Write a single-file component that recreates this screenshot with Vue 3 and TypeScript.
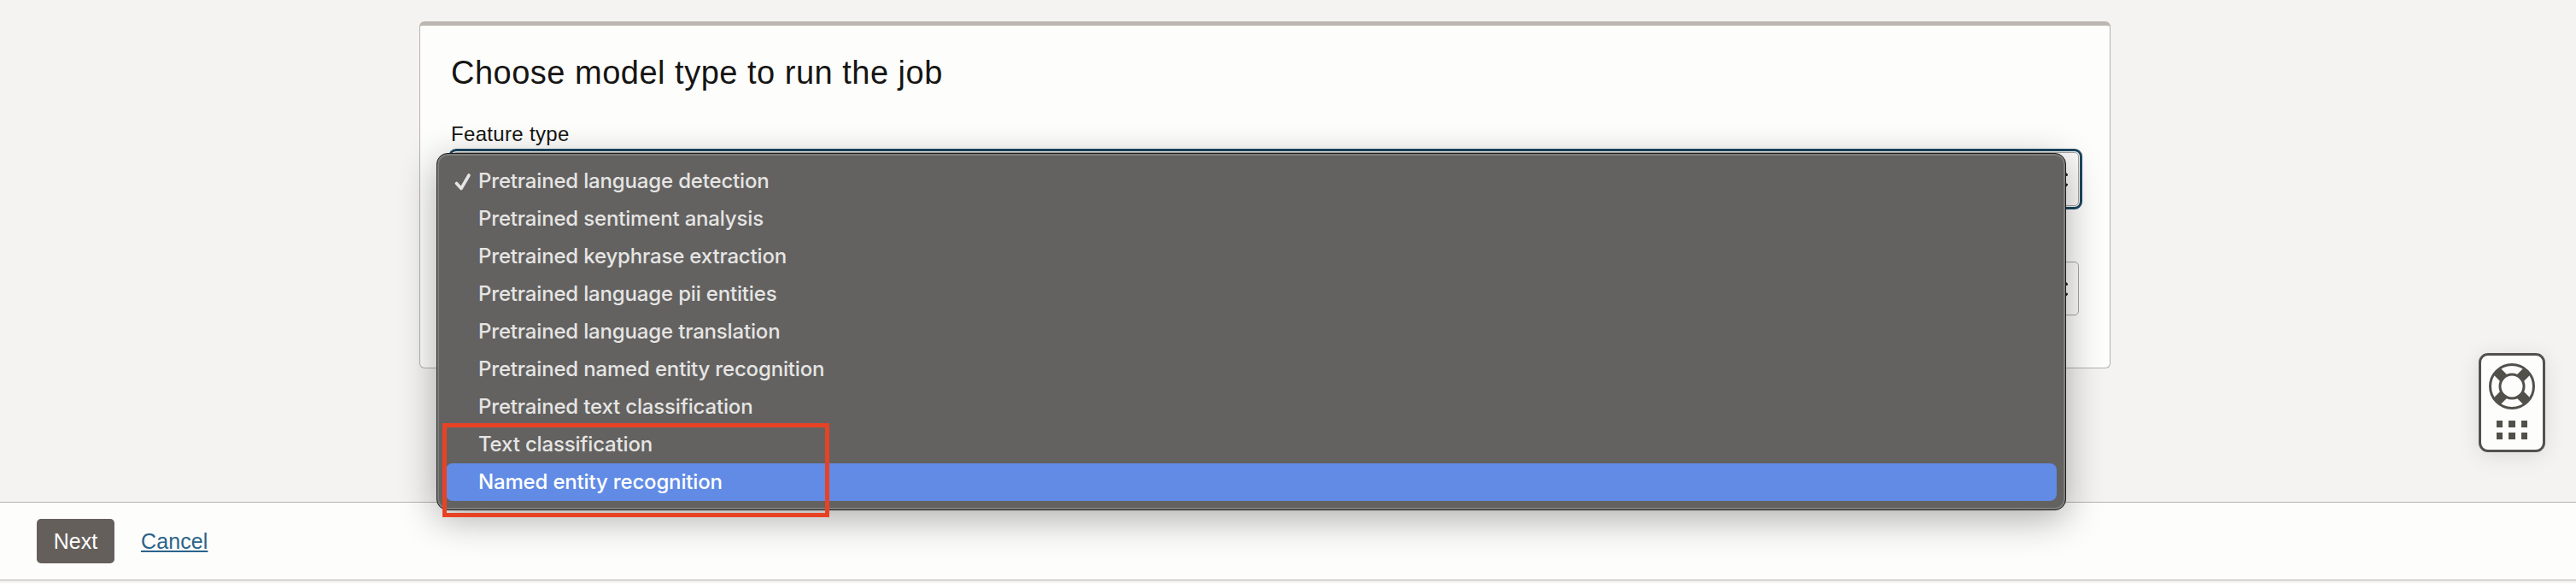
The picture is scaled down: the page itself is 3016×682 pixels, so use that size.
<script setup lang="ts">
import { ref } from 'vue'

const options: string[] = [
  'Pretrained language detection',
  'Pretrained sentiment analysis',
  'Pretrained keyphrase extraction',
  'Pretrained language pii entities',
  'Pretrained language translation',
  'Pretrained named entity recognition',
  'Pretrained text classification',
  'Text classification',
  'Named entity recognition',
]
const selected = ref(0)
const active = ref(8)
</script>

<template>
  <div class="page">
    <main class="content">
      <section class="card">
        <h1 class="title">Choose model type to run the job</h1>
        <label class="label">Feature type</label>
        <div class="field">
          <div class="select focused">
            <svg class="arrows" viewBox="0 0 14 26"><path d="M1.500 7.500L7 2l5.500 5.500M1.500 19L7 24.500l5.500-5.500" /></svg>
          </div>
          <div class="menu">
            <div
              v-for="(option, i) in options"
              :key="option"
              class="option"
              :class="{ active: i === active }"
              @mouseenter="active = i"
              @click="selected = i"
            >
              <svg v-if="i === selected" class="check" viewBox="0 0 20 22"><path d="M2.500 12.500L8 18.500L17 3" /></svg>
              <span class="text">{{ option }}</span>
            </div>
            <div class="marker"></div>
          </div>
        </div>
        <div class="select second">
          <svg class="arrows" viewBox="0 0 14 26"><path d="M1.500 7.500L7 2l5.500 5.500M1.500 19L7 24.500l5.500-5.500" /></svg>
        </div>
      </section>
    </main>
    <footer class="footer">
      <button class="next">Next</button>
      <a class="cancel">Cancel</a>
    </footer>
    <div class="help">
      <svg width="54" height="54" viewBox="-27 -27 54 54">
        <g class="spokes">
          <path d="M-18 -18L-10 -10M18 -18L10 -10M-18 18L-10 10M18 18L10 10" />
        </g>
        <circle r="25.500" />
        <circle r="14" />
      </svg>
      <div class="dots"><i v-for="n in 6" :key="n"></i></div>
    </div>
  </div>
</template>

<style>
body {
  margin: 0;
  background: #f4f3f2;
}
</style>

<style scoped>
.page {
  position: relative;
  box-sizing: border-box;
  width: 3016px;
  height: 682px;
  overflow: hidden;
  display: flex;
  flex-direction: column;
  background: #f4f3f2;
  color: #161513;
  font-family: 'Liberation Sans', Arial, sans-serif;
}
.content {
  box-sizing: border-box;
  height: 587px;
  padding: 25px 545px 0 491px;
}
.card {
  box-sizing: border-box;
  height: 406px;
  padding: 0 36px 0 37px;
  background: #fdfdfb;
  border: 1px solid #b5b1ad;
  border-top: 5px solid #bbb6b1;
  border-radius: 6px;
}
.title {
  margin: 0 0 0 -1px;
  padding-top: 32px;
  font-size: 38px;
  line-height: 46px;
  font-weight: 400;
  letter-spacing: 0.5px;
}
.label {
  display: block;
  margin: 34px 0 0 -1px;
  height: 36px;
  font-size: 24px;
  line-height: 30px;
  letter-spacing: 0.32px;
}
.field {
  position: relative;
}
.select {
  box-sizing: border-box;
  height: 63px;
  display: flex;
  align-items: center;
  justify-content: flex-end;
  padding-right: 12px;
  background: #fcfbfa;
  border: 1px solid #a9a4a0;
  border-radius: 5px;
}
.focused {
  outline: 3px solid #1c4760;
  outline-offset: 1px;
}
.second {
  margin-top: 65px;
}
.arrows {
  width: 14px;
  height: 26px;
  fill: none;
  stroke: #222;
  stroke-width: 3;
  stroke-linecap: round;
}
.menu {
  position: absolute;
  z-index: 5;
  top: 1px;
  left: -18px;
  box-sizing: border-box;
  width: 1908px;
  height: 418px;
  padding: 10px;
  background: #636260;
  border: 1px solid #1e1e1d;
  border-radius: 13px;
  box-shadow: inset 0 0 0 2px #7e7f7c, 0 10px 44px rgba(0, 0, 0, 0.32);
}
.option {
  display: flex;
  align-items: center;
  height: 44px;
  padding-left: 38px;
  position: relative;
  color: #e6e5e4;
  font: 500 24px/44px Inter, sans-serif;
  letter-spacing: -0.17px;
  border-radius: 8px;
  white-space: nowrap;
}
.active {
  background: #618be5;
  color: #fff;
}
.check {
  position: absolute;
  left: 10px;
  top: 12px;
  width: 20px;
  height: 22px;
  fill: none;
  stroke: #e6e5e4;
  stroke-width: 3.6;
  stroke-linecap: round;
  stroke-linejoin: round;
}
.marker {
  position: absolute;
  left: 6px;
  top: 315px;
  box-sizing: border-box;
  width: 453px;
  height: 110px;
  border: 5px solid #e84225;
}
.footer {
  box-sizing: border-box;
  height: 92px;
  display: flex;
  align-items: center;
  gap: 31px;
  padding-left: 43px;
  background: #fdfdfb;
  border-top: 1px solid #b5b1ad;
  border-bottom: 1px solid #b5b1ad;
}
.next {
  width: 91px;
  height: 52px;
  padding: 0;
  border: 0;
  border-radius: 5px;
  background: #655f5b;
  color: #fff;
  font: 25px/52px 'Liberation Sans', Arial, sans-serif;
}
.cancel {
  color: #2b6389;
  font-size: 25px;
  line-height: 30px;
  letter-spacing: 0.1px;
  text-decoration: underline;
  text-decoration-thickness: 2px;
  text-underline-offset: 2px;
}
.help {
  position: absolute;
  left: 2902px;
  top: 413px;
  box-sizing: border-box;
  width: 78px;
  height: 116px;
  padding-top: 9px;
  display: flex;
  flex-direction: column;
  align-items: center;
  gap: 13px;
  background: #fdfdfc;
  border: 3px solid #52514e;
  border-radius: 11px;
  box-shadow: 0 4px 26px rgba(0, 0, 0, 0.1);
}
.help svg {
  fill: none;
  stroke: #52504a;
  stroke-width: 3;
}
.help svg .spokes {
  stroke-width: 11;
}
.dots {
  display: grid;
  grid-template-columns: repeat(3, 7.5px);
  gap: 6.5px 6.8px;
}
.dots i {
  height: 7.5px;
  background: #52504a;
}
</style>
